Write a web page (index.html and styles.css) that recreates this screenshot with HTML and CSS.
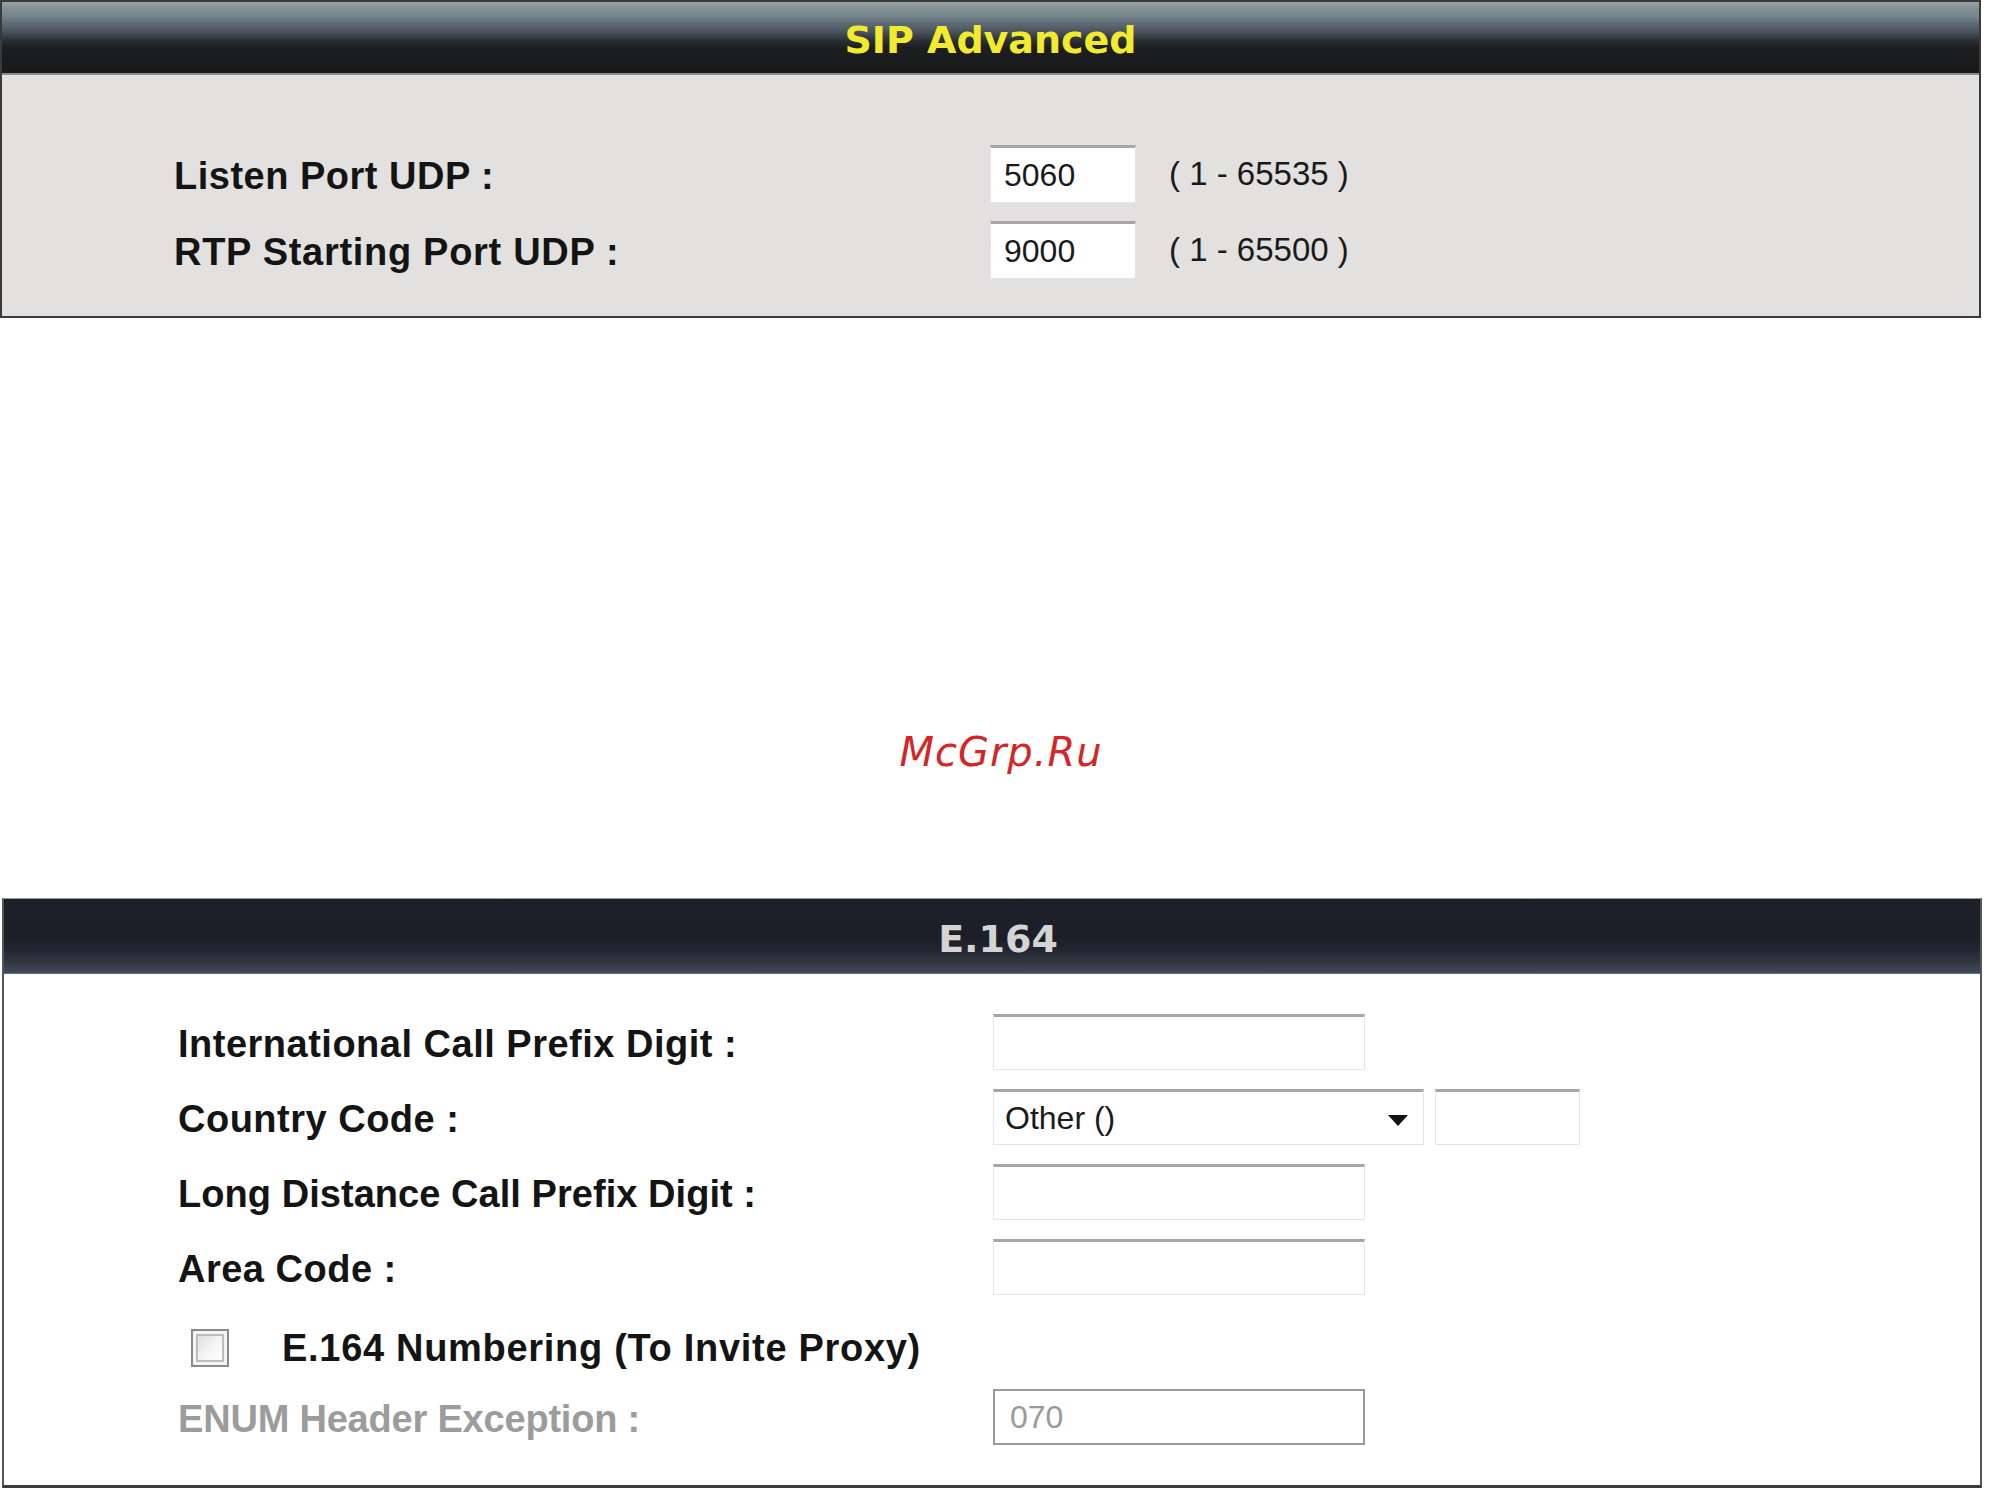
FILE: index.html
```html
<!DOCTYPE html>
<html>
<head>
<meta charset="utf-8">
<title>SIP Advanced / E.164</title>
<link rel="stylesheet" href="styles.css">
</head>
<body>
<section class="panel panel-sip">
  <div class="hdr hdr-sip"><span>SIP Advanced</span></div>
  <div class="body body-sip">
    <div class="rows rows-sip">
      <div class="label">Listen Port UDP :</div>
      <div class="field"><div class="box box-port">5060</div><span class="range">( 1 - 65535 )</span></div>
      <div class="label label-wide">RTP Starting Port UDP :</div>
      <div class="field"><div class="box box-port">9000</div><span class="range">( 1 - 65500 )</span></div>
    </div>
  </div>
</section>

<div class="gap">
  <div class="watermark">McGrp.Ru</div>
</div>

<section class="panel panel-e164">
  <div class="hdr hdr-e164"><span>E.164</span></div>
  <div class="body body-e164">
    <div class="rows rows-e164">
      <div class="label">International Call Prefix Digit :</div>
      <div class="field"><div class="box box-wide"></div></div>
      <div class="label">Country Code :</div>
      <div class="field">
        <div class="box box-select"><span>Other ()</span>
          <svg class="arrow" width="20" height="11" viewBox="0 0 20 11"><path d="M0 0H20L10 11Z" fill="#111"/></svg>
        </div>
        <div class="box box-small"></div>
      </div>
      <div class="label label-tight">Long Distance Call Prefix Digit :</div>
      <div class="field"><div class="box box-wide"></div></div>
      <div class="label">Area Code :</div>
      <div class="field"><div class="box box-wide"></div></div>
      <div class="check-row">
        <span class="checkbox"></span>
        <span class="check-label">E.164 Numbering (To Invite Proxy)</span>
      </div>
      <div class="label label-dis">ENUM Header Exception :</div>
      <div class="field"><div class="box box-wide box-dis">070</div></div>
    </div>
  </div>
</section>
</body>
</html>
```
FILE: styles.css
```css
html, body {
  margin: 0;
  padding: 0;
  background: #ffffff;
}

body {
  font-family: "Liberation Sans", Arial, sans-serif;
  color: #111;
}

.panel {
  box-sizing: border-box;
}

.panel-sip {
  width: 1981px;
  border: 2px solid #3a3a3a;
  background: #e2e1df;
}

.hdr {
  display: flex;
  align-items: center;
  justify-content: center;
  font-family: "DejaVu Sans", Verdana, sans-serif;
  font-weight: bold;
  font-size: 38px;
}

.hdr-sip {
  height: 73px;
  box-sizing: border-box;
  padding-top: 4px;
  border-bottom: 2px solid #8c8c8c;
  color: #f2ea2e;
  background: linear-gradient(to bottom,
    #98a3a6 0px, #7f8d91 8px, #76868b 14px, #5d6a74 22px,
    #48525c 30px, #2c3136 38px, #1c1e20 46px, #17191a 100%);
}

.body-sip {
  padding: 70px 0 37px 172px;
}

.rows {
  display: grid;
  align-items: center;
}

.rows-sip {
  grid-template-columns: 816px auto;
  row-gap: 18px;
}

.rows-sip .field,
.rows-sip .box {
  height: 58px;
  line-height: 58px;
}

.rows-sip .label {
  height: 58px;
  line-height: 53px;
}

.rows-e164 {
  grid-template-columns: 815px auto;
  row-gap: 19px;
}

.label {
  box-sizing: border-box;
  height: 56px;
  font-weight: bold;
  font-size: 38px;
  line-height: 51px;
  padding-top: 5px;
  letter-spacing: 0.5px;
  color: #141414;
  white-space: nowrap;
}

.label-wide {
  letter-spacing: 0.7px;
}

.label-tight {
  letter-spacing: 0.05px;
}

.field {
  display: flex;
  align-items: center;
  height: 56px;
}

.box {
  box-sizing: border-box;
  height: 56px;
  background: #fff;
  border: 1px solid #e4e6ea;
  border-top: 3px solid #a6a6a8;
  font-size: 32px;
  color: #1a1a1a;
  padding-left: 13px;
  display: flex;
  align-items: center;
}

.box-port {
  width: 146px;
}

.range {
  margin-left: 33px;
  font-size: 33px;
  color: #1a1a1a;
}

.gap {
  height: 580px;
  box-sizing: border-box;
  padding-top: 412px;
  display: flex;
  justify-content: center;
}

.watermark {
  margin-left: 12px;
  font-family: "DejaVu Sans", Verdana, sans-serif;
  font-style: italic;
  font-size: 40px;
  line-height: 44px;
  letter-spacing: 1px;
  color: #d42626;
  height: 44px;
}

.panel-e164 {
  margin-left: 2px;
  width: 1980px;
  border-top: 1px solid #9a9a9a;
  border-left: 2px solid #555;
  border-right: 2px solid #555;
  border-bottom: 3px solid #3c3c3c;
  background: #fff;
}

.hdr-e164 {
  height: 75px;
  box-sizing: border-box;
  padding-top: 6px;
  padding-left: 12px;
  border-bottom: 1px solid #6a7080;
  color: #d4d4d4;
  background: linear-gradient(to bottom,
    #1d2028 0px, #1c1f27 40px, #232731 52px, #30353f 62px, #3f4656 72px, #454c5c 100%);
}

.body-e164 {
  padding: 40px 0 40px 174px;
}

.box-wide {
  width: 372px;
}

.box-select {
  width: 431px;
  position: relative;
  padding-left: 11px;
}

.arrow {
  position: absolute;
  right: 15px;
  top: 23px;
}

.box-small {
  width: 145px;
  margin-left: 11px;
}

.check-row {
  grid-column: 1 / 3;
  display: flex;
  align-items: center;
  height: 56px;
  margin-top: 6px;
  margin-bottom: -6px;
}

.checkbox {
  box-sizing: border-box;
  width: 38px;
  height: 38px;
  margin-left: 13px;
  border: 2px solid #8a8a8a;
  background: linear-gradient(to bottom right, #d8d8d8, #f8f8f8 60%, #ffffff);
  box-shadow: inset 0 0 0 3px #f4f4f4, inset 0 0 0 5px #bdbdbd;
}

.check-label {
  margin-left: 53px;
  font-weight: bold;
  font-size: 38px;
  letter-spacing: 0.7px;
  color: #141414;
  white-space: nowrap;
}

.label-dis {
  color: #9c9c9c;
  letter-spacing: -0.2px;
}

.box-dis {
  border: 2px solid #9a9a9a;
  color: #9a9a9a;
  padding-left: 15px;
}
```
